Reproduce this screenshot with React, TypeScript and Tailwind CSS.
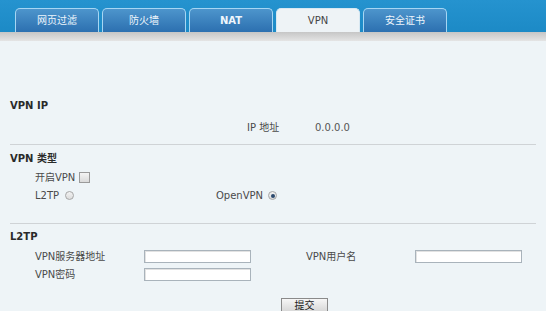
import React from "react";

const tabs = ["网页过滤", "防火墙", "NAT", "VPN", "安全证书"];

const font = {
  fontFamily: '"DejaVu Sans", Verdana, "Noto Sans CJK SC", sans-serif',
};

function Row({ children, className = "" }: { children: React.ReactNode; className?: string }) {
  return <div className={`flex items-center h-[13px] ${className}`}>{children}</div>;
}

function TextInput() {
  return <div className="w-[107px] h-[13px] bg-white border border-[#a9b3bb] shadow-[inset_1px_1px_0_#e2e2e2]" />;
}

function Radio({ checked }: { checked?: boolean }) {
  return (
    <span className="w-[9px] h-[9px] rounded-full border border-[#a6a6a6] bg-gradient-to-b from-[#f2f2f2] to-[#dcdcdc] flex items-center justify-center">
      {checked && <span className="w-[4px] h-[4px] rounded-full bg-[#2c4a6e]" />}
    </span>
  );
}

export default function App() {
  return (
    <div className="w-[546px] h-[311px] overflow-hidden bg-[#eef4f7] text-[10px] text-[#4a4a4a]" style={font}>
      {/* Tab band */}
      <div className="h-[32px] bg-gradient-to-b from-[#2593cf] to-[#1c8ac6] flex items-end pl-[15px] gap-[3px]">
        {tabs.map((t) => {
          const active = t === "VPN";
          return (
            <div
              key={t}
              className={`w-[84px] h-[24px] rounded-t-[5px] border border-b-0 flex items-center justify-center ${
                active
                  ? "bg-[#eef3f6] border-[#d8e8f2] text-[#444]"
                  : "bg-gradient-to-b from-[#4d95cc] to-[#2c70b0] border-[#a6d6f3] text-[#eef6fc]"
              } ${t === "NAT" ? "font-bold" : ""}`}
            >
              {t}
            </div>
          );
        })}
      </div>
      <div className="h-[9px] bg-gradient-to-b from-[#c6c6c6] to-[#e4e4e4]" />

      <div className="px-[10px]">
        <Row className="mt-[58px] font-bold text-[#2a2a2a]">VPN IP</Row>
        <Row className="mt-[9px]">
          <span className="ml-[237px] w-[68px]">IP 地址</span>
          <span className="text-[#555]">0.0.0.0</span>
        </Row>
        <div className="mt-[10px] border-t border-[#cfd3d6]" />

        <Row className="mt-[7px] font-bold text-[#2a2a2a]">VPN 类型</Row>
        <Row className="mt-[6px] pl-[25px]">
          <span>开启VPN</span>
          <span className="ml-[4px] w-[11px] h-[11px] border border-[#9a9a9a] bg-gradient-to-b from-[#f4f4f4] to-[#dadada]" />
        </Row>
        <Row className="mt-[5px] pl-[25px]">
          <span className="w-[181px] flex items-center gap-[6px]">
            L2TP <Radio />
          </span>
          <span className="flex items-center gap-[5px]">
            OpenVPN <Radio checked />
          </span>
        </Row>
        <div className="mt-[21px] border-t border-[#cfd3d6]" />

        <Row className="mt-[6px] font-bold text-[#2a2a2a]">L2TP</Row>
        <Row className="mt-[7px] pl-[25px]">
          <span className="w-[109px]">VPN服务器地址</span>
          <TextInput />
          <span className="ml-[55px] w-[109px]">VPN用户名</span>
          <TextInput />
        </Row>
        <Row className="mt-[5px] pl-[25px]">
          <span className="w-[109px]">VPN密码</span>
          <TextInput />
        </Row>
        <div className="mt-[17px] flex">
          <button className="ml-[271px] w-[47px] h-[16px] border border-[#8a8a8a] bg-gradient-to-b from-[#f6f6f6] to-[#d4d4d4] text-[10px] text-[#222] leading-none">
            提交
          </button>
        </div>
      </div>
    </div>
  );
}
